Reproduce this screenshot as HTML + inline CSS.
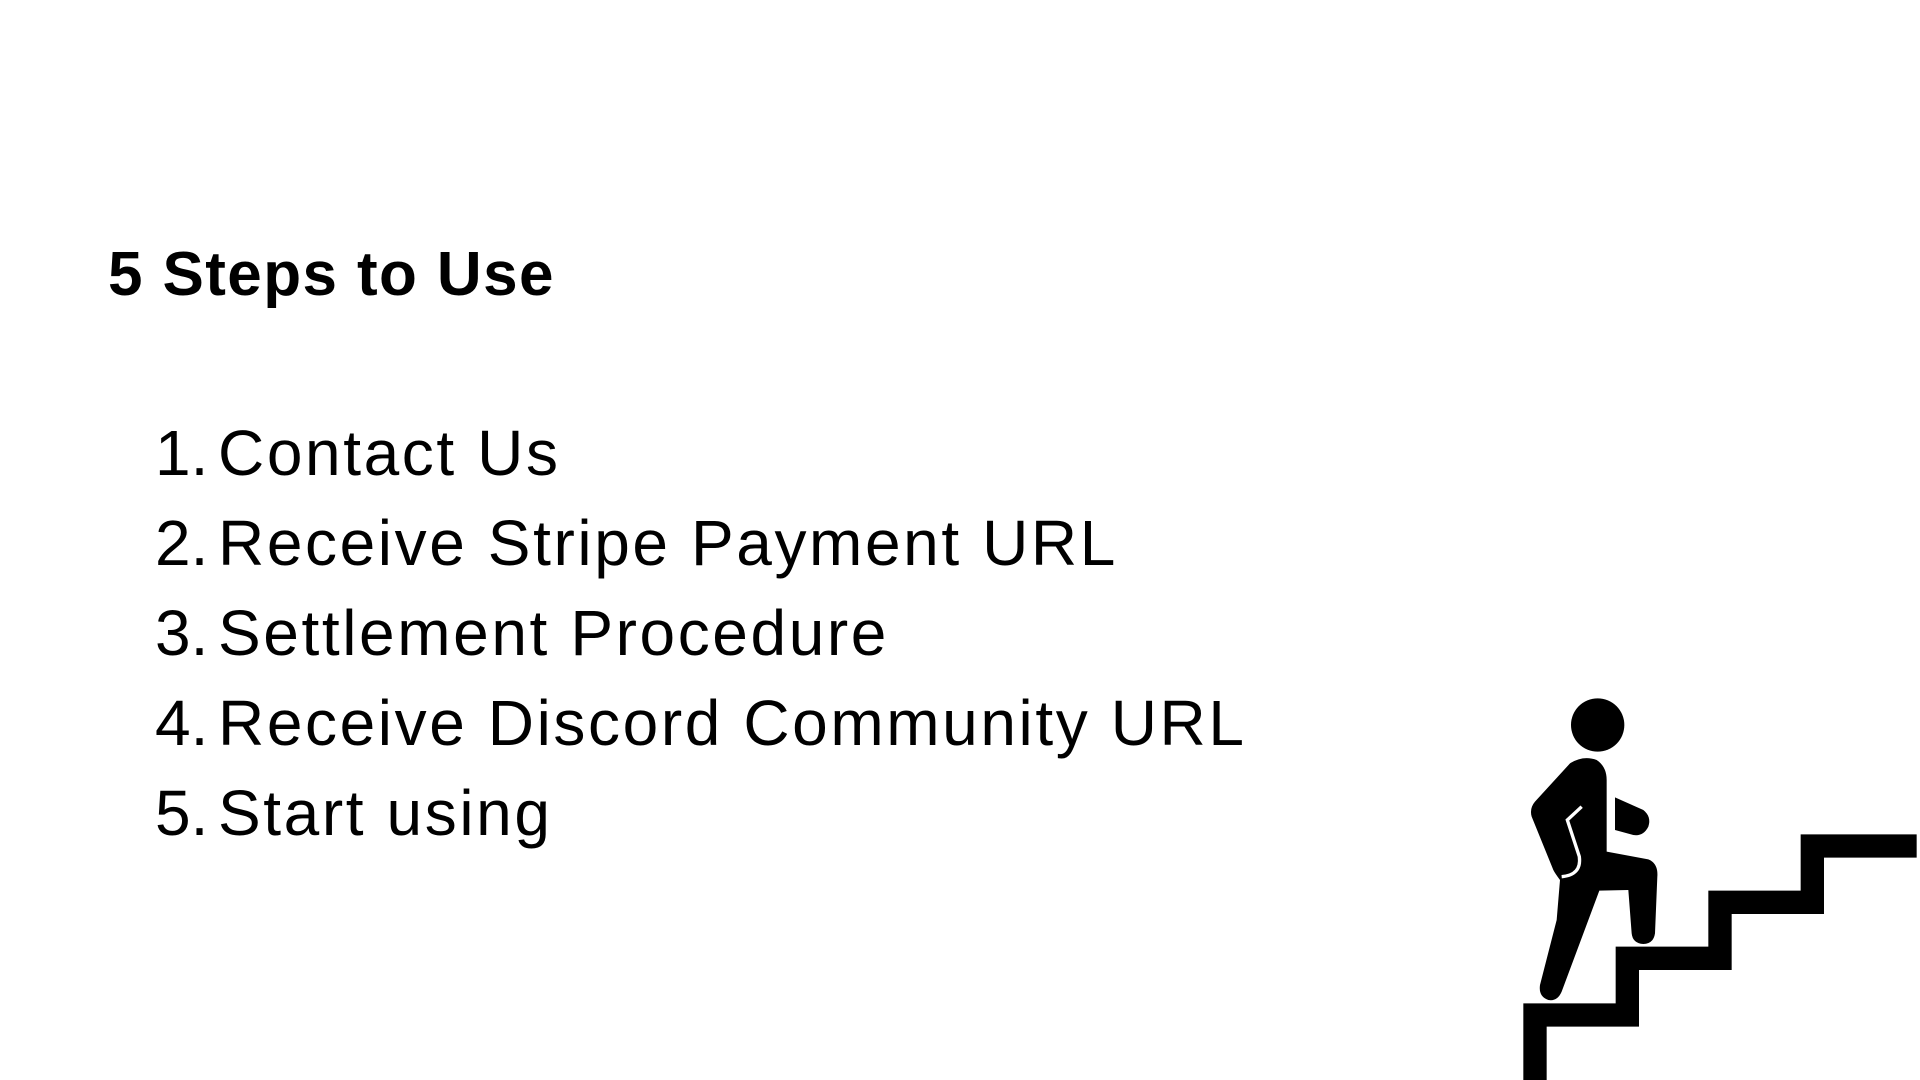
<!DOCTYPE html>
<html><head><meta charset="utf-8"><style>
html,body{margin:0;padding:0;background:#fff;width:1920px;height:1080px;overflow:hidden;position:relative;font-family:"Liberation Sans",sans-serif;color:#000}
.h{position:absolute;left:108px;top:239px;font-size:62px;font-weight:bold;line-height:72px;white-space:nowrap;letter-spacing:1.4px}
.li{position:absolute;font-size:64px;line-height:72px;white-space:nowrap;letter-spacing:2.6px}
.n{position:absolute;left:155px;letter-spacing:0}
.t{position:absolute;left:218px}
</style></head><body>
<div class="h">5 Steps to Use</div>
<div class="li" style="top:417px"><span class="n">1.</span><span class="t">Contact Us</span></div>
<div class="li" style="top:507px"><span class="n">2.</span><span class="t">Receive Stripe Payment URL</span></div>
<div class="li" style="top:597px"><span class="n">3.</span><span class="t">Settlement Procedure</span></div>
<div class="li" style="top:687px"><span class="n">4.</span><span class="t">Receive Discord Community URL</span></div>
<div class="li" style="top:777px"><span class="n">5.</span><span class="t">Start using</span></div>
<svg width="1920" height="1080" style="position:absolute;left:0;top:0">
<g transform="translate(1480,680) scale(0.33333)">
<polyline points="165,1250 165,1005 442,1005 442,835 720,835 720,667 997,667 997,498 1310,498" fill="none" stroke="#000" stroke-width="70" stroke-linejoin="miter"/>
<circle cx="353" cy="135" r="80" fill="#000"/>
<path d="M270,250 Q310,225 350,240 Q380,260 380,300 L380,515 L505,538 Q535,550 532,590 L525,760 Q520,792 490,792 Q458,790 455,760 L445,630 L358,632 L245,935 Q232,965 205,960 Q175,950 180,915 L230,720 L240,600 Q225,580 220,570 L155,410 Q148,385 165,365 Z" fill="#000"/>
<path d="M305,380 L262,420 L298,530 Q305,585 245,590" fill="none" stroke="#fff" stroke-width="10"/>
<path d="M405,352 L490,390 Q515,410 505,440 Q490,470 460,465 L405,450 Z" fill="#000"/>
</g>
</svg>
</body></html>
